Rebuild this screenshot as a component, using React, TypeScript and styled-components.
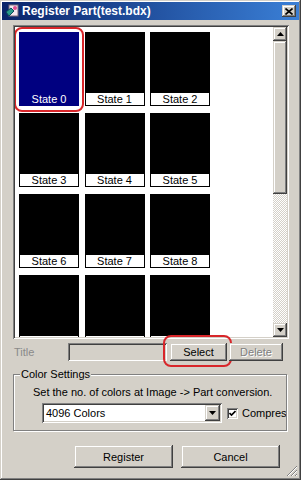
import styled, { createGlobalStyle } from "styled-components";

const GlobalStyle = createGlobalStyle`
  html, body {
    margin: 0;
    padding: 0;
    background: #d4d0c8;
  }
  * {
    box-sizing: border-box;
  }
`;

const raised = `
  background: #d4d0c8;
  box-shadow: inset -1px -1px #404040, inset 1px 1px #d4d0c8,
    inset -2px -2px #808080, inset 2px 2px #fff;
`;

const sunken = `
  box-shadow: inset 1px 1px #808080, inset -1px -1px #fff,
    inset 2px 2px #404040, inset -2px -2px #d4d0c8;
`;

const Window = styled.div`
  position: relative;
  width: 301px;
  height: 480px;
  padding: 2px;
  display: flex;
  flex-direction: column;
  overflow: hidden;
  font-family: "Liberation Sans", Arial, sans-serif;
  font-size: 11px;
  color: #000;
  ${raised}
`;

const TitleBar = styled.div`
  height: 18px;
  display: flex;
  align-items: center;
  gap: 2px;
  padding: 0 3px 0 2px;
  background: linear-gradient(to right, #0a246a, #3a7fd6);
  color: #fff;
  font-weight: bold;
  font-size: 12px;
`;

const TitleText = styled.span`
  flex: 1;
  white-space: nowrap;
`;

const CloseButton = styled.div`
  width: 14px;
  height: 12px;
  display: flex;
  align-items: center;
  justify-content: center;
  ${raised}
`;

const Body = styled.div`
  flex: 1;
  display: flex;
  flex-direction: column;
  padding: 5px 10px 0 11px;
`;

const ListBox = styled.div`
  height: 314px;
  padding: 2px;
  display: flex;
  background: #fff;
  ${sunken}
`;

const TileGrid = styled.div`
  flex: 1;
  overflow: hidden;
  padding: 5px 0 0 4px;
  display: grid;
  grid-template-columns: repeat(3, 60px);
  grid-auto-rows: 74px;
  column-gap: 5.5px;
  row-gap: 7px;
  align-content: start;
`;

const Tile = styled.div<{ $selected?: boolean }>`
  position: relative;
  display: flex;
  flex-direction: column;
  padding: 1px;
  background: ${(p) => (p.$selected ? "#000080" : "#000")};
`;

const Preview = styled.div`
  flex: 1;
`;

const TileLabel = styled.div<{ $selected?: boolean }>`
  height: 12px;
  line-height: 12px;
  text-align: center;
  background: ${(p) => (p.$selected ? "#000080" : "#fff")};
  color: ${(p) => (p.$selected ? "#fff" : "#000")};
`;

const Highlight = styled.div<{ $t: number; $r: number; $b: number; $l: number }>`
  position: absolute;
  top: ${(p) => p.$t}px;
  right: ${(p) => p.$r}px;
  bottom: ${(p) => p.$b}px;
  left: ${(p) => p.$l}px;
  border: 2px solid #d8262a;
  border-radius: 8px;
  pointer-events: none;
`;

const ScrollBar = styled.div`
  width: 14px;
  display: flex;
  flex-direction: column;
`;

const ScrollButton = styled.div`
  height: 14px;
  display: flex;
  align-items: center;
  justify-content: center;
  ${raised}
`;

const Thumb = styled.div`
  height: 153px;
  ${raised}
`;

const Track = styled.div`
  flex: 1;
  background-color: #d4d0c8;
  background-image: conic-gradient(#fff 25%, #d4d0c8 0 50%, #fff 0 75%, #d4d0c8 0);
  background-size: 2px 2px;
`;

const TitleRow = styled.div`
  margin-top: 4px;
  height: 18px;
  display: flex;
  align-items: center;
`;

const FieldLabel = styled.span`
  width: 55px;
  padding-left: 1px;
  color: #8a8a8a;
`;

const TextField = styled.div`
  width: 99px;
  height: 18px;
  background: #d4d0c8;
  ${sunken}
`;

const Button = styled.button<{ $w: number; $h: number; $disabled?: boolean }>`
  position: relative;
  width: ${(p) => p.$w}px;
  height: ${(p) => p.$h}px;
  border: none;
  padding: 0;
  font-family: inherit;
  font-size: 11px;
  color: ${(p) => (p.$disabled ? "#808080" : "#000")};
  text-shadow: ${(p) => (p.$disabled ? "1px 1px #fff" : "none")};
  ${raised}
`;

const Group = styled.fieldset`
  min-width: 0;
  margin: 7px 2px 0 0;
  padding: 0 6px 7px 6px;
  border: 1px solid #808080;
  box-shadow: inset 1px 1px #fff, 1px 1px #fff;
`;

const Legend = styled.legend`
  padding: 0 1px;
  line-height: 13px;
  background: #d4d0c8;
`;

const GroupText = styled.div`
  margin: 5px 0 0 13px;
  line-height: 13px;
  white-space: nowrap;
`;

const ControlRow = styled.div`
  margin: 4px -6px 0 0;
  display: flex;
  align-items: center;
  overflow: hidden;
  white-space: nowrap;
`;

const Select = styled.div`
  margin-left: 22px;
  width: 180px;
  height: 20px;
  flex-shrink: 0;
  padding: 2px;
  display: flex;
  background: #fff;
  ${sunken}
`;

const SelectValue = styled.span`
  flex: 1;
  padding-left: 2px;
  line-height: 16px;
`;

const SelectArrow = styled.div`
  width: 15px;
  display: flex;
  align-items: center;
  justify-content: center;
  ${raised}
`;

const CheckBox = styled.div`
  margin-left: 5px;
  width: 11px;
  height: 11px;
  flex-shrink: 0;
  display: flex;
  align-items: center;
  justify-content: center;
  background: #fff;
  ${sunken}
`;

const CheckText = styled.span`
  margin-left: 4px;
`;

const ButtonRow = styled.div`
  margin: 14px 9px 0 0;
  display: flex;
  justify-content: flex-end;
  gap: 8px;
`;

const Grip = styled.svg`
  position: absolute;
  right: 3px;
  bottom: 3px;
`;

const Arrow = ({ down }: { down?: boolean }) => (
  <svg width="7" height="4" viewBox="0 0 7 4">
    <path d={down ? "M0 0h7L3.5 4z" : "M0 4h7L3.5 0z"} fill="#000" />
  </svg>
);

const tiles = Array.from({ length: 12 }, (_, i) => i);

export default function App() {
  return (
    <>
      <GlobalStyle />
      <Window>
        <TitleBar>
          <svg width="16" height="16" viewBox="0 0 16 16">
            <rect x="5" y="2" width="9" height="11" fill="#f4e6ee" stroke="#7a6a7a" />
            <path d="M2 9l5-4 3 3-5 5z" fill="#2a9a8a" stroke="#0a4a5a" />
            <circle cx="11" cy="5" r="2" fill="#e05090" />
          </svg>
          <TitleText>Register Part(test.bdx)</TitleText>
          <CloseButton>
            <svg width="8" height="7" viewBox="0 0 8 7">
              <path d="M0.5 0.5l7 6M7.5 0.5l-7 6" stroke="#000" strokeWidth="1.6" />
            </svg>
          </CloseButton>
        </TitleBar>
        <Body>
          <ListBox>
            <TileGrid>
              {tiles.map((i) => (
                <Tile key={i} $selected={i === 0}>
                  <Preview />
                  <TileLabel $selected={i === 0}>State {i}</TileLabel>
                  {i === 0 && <Highlight $t={-5} $r={-5} $b={-6} $l={-5} />}
                </Tile>
              ))}
            </TileGrid>
            <ScrollBar>
              <ScrollButton>
                <Arrow />
              </ScrollButton>
              <Thumb />
              <Track />
              <ScrollButton>
                <Arrow down />
              </ScrollButton>
            </ScrollBar>
          </ListBox>
          <TitleRow>
            <FieldLabel>Title</FieldLabel>
            <TextField />
            <Button $w={57} $h={18} style={{ marginLeft: 3 }}>
              Select
              <Highlight $t={-8} $r={-5} $b={-6} $l={-7} />
            </Button>
            <Button $w={54} $h={18} $disabled style={{ marginLeft: 2 }}>
              Delete
            </Button>
          </TitleRow>
          <Group>
            <Legend>Color Settings</Legend>
            <GroupText>Set the no. of colors at Image -&gt; Part conversion.</GroupText>
            <ControlRow>
              <Select>
                <SelectValue>4096 Colors</SelectValue>
                <SelectArrow>
                  <Arrow down />
                </SelectArrow>
              </Select>
              <CheckBox>
                <svg width="7" height="7" viewBox="0 0 7 7">
                  <path d="M0.5 3l2 2 4-4" stroke="#000" strokeWidth="1.6" fill="none" />
                </svg>
              </CheckBox>
              <CheckText>Compress</CheckText>
            </ControlRow>
          </Group>
          <ButtonRow>
            <Button $w={99} $h={23}>Register</Button>
            <Button $w={99} $h={23}>Cancel</Button>
          </ButtonRow>
        </Body>
        <Grip width="12" height="12" viewBox="0 0 12 12">
          <path d="M11 1L1 11M11 5L5 11M11 9L9 11" stroke="#808080" strokeWidth="1" />
          <path d="M11 2L2 11M11 6L6 11M11 10L10 11" stroke="#fff" strokeWidth="1" />
        </Grip>
      </Window>
    </>
  );
}
